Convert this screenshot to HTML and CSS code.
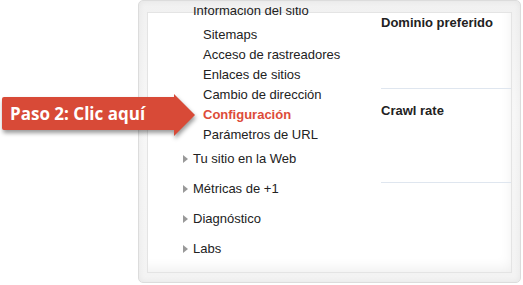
FILE: index.html
```html
<!DOCTYPE html>
<html lang="es">
<head>
<meta charset="UTF-8">
<meta name="viewport" content="width=device-width, initial-scale=1.0">
<title>Configuración</title>
<link rel="stylesheet" href="styles.css">
</head>
<body>
<div class="frame">
    <div class="panel">
        <ul class="nav">
            <li class="group open">
                <span class="group-title cut">Información del sitio</span>
                <ul class="sub">
                    <li>Sitemaps</li>
                    <li>Acceso de rastreadores</li>
                    <li>Enlaces de sitios</li>
                    <li>Cambio de dirección</li>
                    <li class="active">Configuración</li>
                    <li>Parámetros de URL</li>
                </ul>
            </li>
            <li class="group"><span class="caret"></span>Tu sitio en la Web</li>
            <li class="group"><span class="caret"></span>Métricas de +1</li>
            <li class="group"><span class="caret"></span>Diagnóstico</li>
            <li class="group"><span class="caret"></span>Labs</li>
        </ul>
        <div class="settings">
            <div class="setting">
                <h3>Dominio preferido</h3>
            </div>
            <div class="setting tall">
                <h3>Crawl rate</h3>
            </div>
        </div>
    </div>
</div>
<div class="callout">
    <svg width="200" height="50" viewBox="0 0 200 50">
        <path d="M4 5 H174 V2 L195 23 L174 44 V38 H4 Q2 38 2 36 V7 Q2 5 4 5 Z" fill="#d84a37"/>
    </svg>
    <span class="callout-label">Paso 2: Clic aquí</span>
</div>
</body>
</html>
```

FILE: styles.css
```css
body {
    margin: 0;
    background: #fff;
    font-family: "Liberation Sans", Arial, sans-serif;
    font-size: 13px;
    color: #222;
}
.frame {
    box-sizing: border-box;
    margin-left: 138px;
    width: 383px;
    height: 283px;
    padding: 11px 8px 9px 8px;
    border: 1px solid #dcdcdc;
    border-radius: 5px;
    background: linear-gradient(#f1f1f1, #f7f7f7 40%, #f3f3f3);
    box-shadow: inset 0 0 6px rgba(0, 0, 0, 0.06);
    display: flex;
}
.panel {
    flex: 1;
    display: flex;
    background: #fff;
    border: 1px solid #e4e4e4;
    box-shadow: inset -8px -12px 14px -10px rgba(0, 0, 0, 0.08);
}
.nav {
    list-style: none;
    margin: -12px 0 0 0;
    padding: 0;
    width: 233px;
    line-height: 20px;
}
.group {
    position: relative;
    padding-left: 45px;
    margin-bottom: 10px;
}
.group.open {
    margin-bottom: 4px;
}
.group-title {
    display: block;
}
.cut {
    clip-path: inset(6px 0 0 0);
}
.caret {
    position: absolute;
    left: 35px;
    top: 6px;
    width: 0;
    height: 0;
    border-top: 4px solid transparent;
    border-bottom: 4px solid transparent;
    border-left: 5px solid #999;
}
.sub {
    list-style: none;
    margin: 4px 0 0 10px;
    padding: 0;
}
.sub .active {
    color: #dd4b39;
    font-weight: bold;
}
.settings {
    flex: 1;
}
.setting {
    height: 75px;
    padding-top: 12px;
    border-bottom: 1px solid #dfe6ef;
}
.setting:first-child {
    padding-top: 0;
}
.setting.tall {
    height: 81px;
}
.setting h3 {
    margin: 0;
    font-size: 13px;
    line-height: 20px;
    font-weight: bold;
    color: #222;
}
.callout {
    position: absolute;
    left: 0;
    top: 92px;
    width: 200px;
    height: 50px;
}
.callout svg {
    display: block;
    filter: drop-shadow(1px 3px 2px rgba(0, 0, 0, 0.4));
}
.callout-label {
    position: absolute;
    left: 10px;
    top: 5px;
    line-height: 33px;
    font-family: "Open Sans", sans-serif;
    font-weight: 700;
    font-size: 17px;
    color: #fff;
    white-space: nowrap;
}
```
